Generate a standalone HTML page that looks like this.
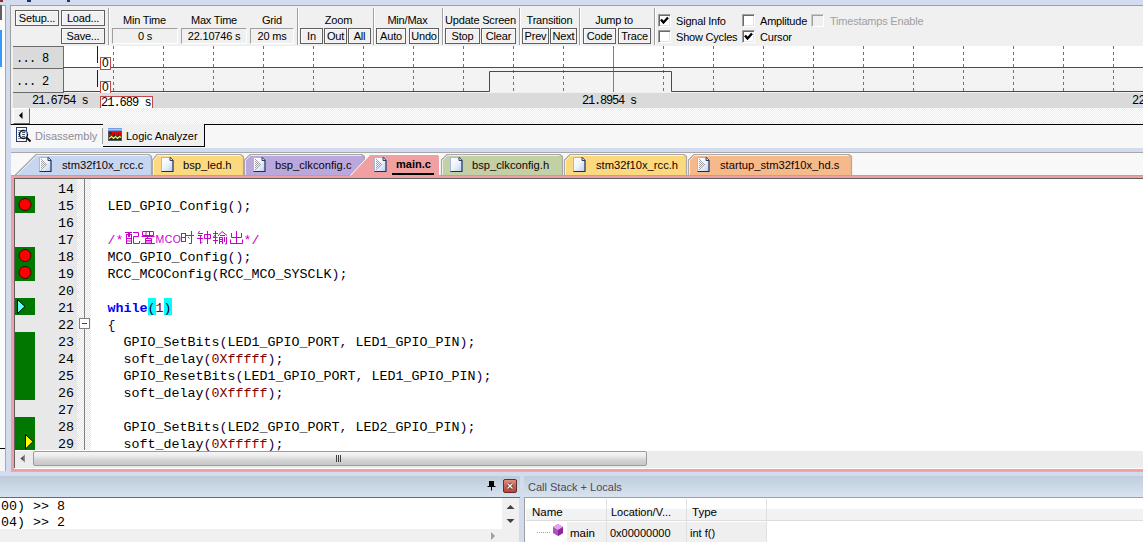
<!DOCTYPE html><html><head><meta charset="utf-8"><style>
*{margin:0;padding:0;box-sizing:border-box}
html,body{width:1143px;height:542px;overflow:hidden;background:#f0f0f0;font-family:"Liberation Sans",sans-serif;font-size:11px;color:#000}
div,span{position:absolute}
.t{white-space:nowrap;line-height:13px}
.btn{border:1px solid #5f5f5f;background:#f0f0f0;box-shadow:inset 1px 1px 0 #fcfcfc,inset -1px -1px 0 #f6f6f6;text-align:center;line-height:15px;white-space:nowrap;letter-spacing:-0.2px}
.fld{border:1px solid #a0a0a0;border-right-color:#fff;border-bottom-color:#fff;background:#f0f0f0;text-align:center;line-height:15px;white-space:nowrap;letter-spacing:-0.2px}
.lbl{text-align:center;white-space:nowrap;line-height:13px;letter-spacing:-0.2px}
.sep{width:2px;border-left:1px solid #a0a0a0;border-right:1px solid #fff}
.mono{font-family:"Liberation Mono",monospace}
.cl{left:91.5px;font-family:"Liberation Mono",monospace;font-size:13.33px;white-space:pre;line-height:17px;height:17px}
.ln{left:15px;width:59px;text-align:right;font-family:"Liberation Mono",monospace;font-size:13.33px;line-height:17px;height:17px}
.cb{width:13px;height:13px;border:1px solid;border-color:#a0a0a0 #fff #fff #a0a0a0;background:#fff;box-shadow:inset 1px 1px 0 #696969,inset -1px -1px 0 #e3e3e3}
.b{font-weight:bold}
.tabt{font-size:11px;line-height:13px;white-space:nowrap;color:#1a0a0a}
</style></head><body>
<div style="left:0px;top:0px;width:1143px;height:5px;background:#d3dbee"></div>
<div style="left:0px;top:0px;width:3px;height:2px;background:#8a3030"></div>
<div style="left:27px;top:0px;width:4px;height:2px;background:#203060"></div>
<div style="left:67px;top:0px;width:3px;height:2px;background:#303050"></div>
<div style="left:0px;top:5px;width:6px;height:466px;background:#fbfbfb;border-right:1px solid #a8a8a8;border-top:1px solid #a8a8a8"></div>
<div style="left:0px;top:5px;width:2px;height:15px;background:#606060"></div>
<div style="left:0px;top:30px;width:2px;height:37px;background:#3399ff"></div>
<div style="left:0px;top:448px;width:5px;height:1px;background:#000"></div>
<div style="left:0px;top:449px;width:5px;height:22px;background:#f5f5f5"></div>
<div style="left:6px;top:5px;width:5px;height:466px;background:#d3dbee"></div>
<div style="left:10px;top:5px;width:1133px;height:120px;background:#f0f0f0;border-left:1px solid #a0a0a0;border-top:1px solid #a0a0a0"></div>
<div class="btn" style="left:15px;top:10px;width:44px;height:16px">Setup...</div>
<div class="btn" style="left:61px;top:10px;width:44px;height:16px">Load...</div>
<div class="btn" style="left:61px;top:28px;width:44px;height:16px">Save...</div>
<div class="sep" style="left:108px;top:8px;height:37px"></div>
<div class="lbl" style="left:112px;top:14px;width:65px">Min Time</div>
<div class="fld" style="left:112px;top:28px;width:66px;height:16px">0 s</div>
<div class="lbl" style="left:181px;top:14px;width:66px">Max Time</div>
<div class="fld" style="left:181px;top:28px;width:66px;height:16px">22.10746 s</div>
<div class="lbl" style="left:250px;top:14px;width:44px">Grid</div>
<div class="fld" style="left:250px;top:28px;width:44px;height:16px">20 ms</div>
<div class="sep" style="left:297px;top:8px;height:37px"></div>
<div class="lbl" style="left:303px;top:14px;width:71px">Zoom</div>
<div class="btn" style="left:300px;top:28px;width:23px;height:16px">In</div>
<div class="btn" style="left:324px;top:28px;width:23px;height:16px">Out</div>
<div class="btn" style="left:348px;top:28px;width:23px;height:16px">All</div>
<div class="sep" style="left:373px;top:8px;height:37px"></div>
<div class="lbl" style="left:376px;top:14px;width:63px">Min/Max</div>
<div class="btn" style="left:376px;top:28px;width:30px;height:16px">Auto</div>
<div class="btn" style="left:409px;top:28px;width:30px;height:16px">Undo</div>
<div class="sep" style="left:442px;top:8px;height:37px"></div>
<div class="lbl" style="left:445px;top:14px;width:71px">Update Screen</div>
<div class="btn" style="left:445px;top:28px;width:35px;height:16px">Stop</div>
<div class="btn" style="left:481px;top:28px;width:35px;height:16px">Clear</div>
<div class="sep" style="left:519px;top:8px;height:37px"></div>
<div class="lbl" style="left:522px;top:14px;width:55px">Transition</div>
<div class="btn" style="left:522px;top:28px;width:27px;height:16px">Prev</div>
<div class="btn" style="left:550px;top:28px;width:27px;height:16px">Next</div>
<div class="sep" style="left:579px;top:8px;height:37px"></div>
<div class="lbl" style="left:580px;top:14px;width:68px">Jump to</div>
<div class="btn" style="left:583px;top:28px;width:33px;height:16px">Code</div>
<div class="btn" style="left:618px;top:28px;width:33px;height:16px">Trace</div>
<div class="sep" style="left:654px;top:8px;height:37px"></div>
<div class="cb" style="left:658px;top:14px;"><svg width="13" height="13" style="position:absolute;left:-1px;top:-1px"><path d="M3 5.5L5.5 8.5L10 3.5" stroke="#000" stroke-width="2.4" fill="none"/></svg></div>
<div class="t" style="left:676px;top:15px;letter-spacing:-0.2px">Signal Info</div>
<div class="cb" style="left:658px;top:30px;"></div>
<div class="t" style="left:676px;top:31px;letter-spacing:-0.2px">Show Cycles</div>
<div class="cb" style="left:742px;top:14px;"></div>
<div class="t" style="left:760px;top:15px;letter-spacing:-0.2px">Amplitude</div>
<div class="cb" style="left:742px;top:30px;"><svg width="13" height="13" style="position:absolute;left:-1px;top:-1px"><path d="M3 5.5L5.5 8.5L10 3.5" stroke="#000" stroke-width="2.4" fill="none"/></svg></div>
<div class="t" style="left:760px;top:31px;letter-spacing:-0.2px">Cursor</div>
<div class="cb" style="left:811px;top:14px;background:#f0f0f0;border-color:#c8c8c8 #fff #fff #c8c8c8;box-shadow:inset 1px 1px 0 #a0a0a0,inset -1px -1px 0 #f0f0f0;"></div>
<div class="t" style="left:830px;top:15px;color:#a0a0a0;letter-spacing:-0.2px">Timestamps Enable</div>
<div style="left:63px;top:46px;width:1080px;height:22px;background:#fff"></div>
<div style="left:63px;top:68px;width:1080px;height:24px;background:#f3f3f3"></div>
<div style="left:13px;top:46px;width:51px;height:23px;background:#dadada;border:1px solid #6a6a6a;border-left:0"></div>
<div style="left:13px;top:68px;width:51px;height:25px;background:#e2e2e2;border:1px solid #6a6a6a;border-left:0"></div>
<div class="t mono" style="left:16px;top:53px;font-size:12px;letter-spacing:-0.7px">... 8</div>
<div class="t mono" style="left:16px;top:76px;font-size:12px;letter-spacing:-0.7px">... 2</div>
<svg style="position:absolute;left:0;top:0" width="1143" height="125">
<path d="M113.5 46V92M163.5 46V92M213.5 46V92M263.5 46V92M313.5 46V92M363.5 46V92M413.5 46V92M463.5 46V92M513.5 46V92M563.5 46V92M663.5 46V92M713.5 46V92M763.5 46V92M813.5 46V92M863.5 46V92M913.5 46V92M963.5 46V92M1013.5 46V92M1063.5 46V92M1113.5 46V92" stroke="#707070" stroke-dasharray="3,3" />
<path d="M613.5 46V92" stroke="#808080"/>
<path d="M63 67.5H1143" stroke="#ff0000"/>
<path d="M63 91.5H489.5V71.5H671.5V91.5H1143" stroke="#008000" fill="none"/>
<path d="M97.5 46V63M97.5 70V87" stroke="#0000ff"/>
<rect x="100.5" y="57.5" width="10" height="12" fill="#fff" stroke="#c04848"/>
<rect x="100.5" y="81.5" width="10" height="12" fill="#fff" stroke="#c04848"/>
</svg>
<div class="t" style="left:102px;top:57px;font-size:12px;line-height:13px">0</div>
<div class="t" style="left:102px;top:81px;font-size:12px;line-height:13px">0</div>
<div style="left:13px;top:93px;width:1130px;height:15px;background:#dadada"></div>
<div class="t mono" style="left:32px;top:94px;font-size:12px;line-height:14px;letter-spacing:-1px">21.6754 s</div>
<div style="left:100px;top:96px;width:53px;height:12px;background:#fff;border:1px solid #c04848;border-bottom:0"></div>
<div class="t mono" style="left:101px;top:96px;font-size:12px;line-height:14px;letter-spacing:-1px">21.689 s</div>
<div class="t mono" style="left:582px;top:94px;font-size:12px;line-height:14px;letter-spacing:-1.2px">21.8954 s</div>
<div class="t mono" style="left:1132px;top:94px;font-size:12px;line-height:14px;letter-spacing:-0.7px">22</div>
<div style="left:12px;top:108px;width:1131px;height:16px;background:repeating-conic-gradient(#ececec 0 25%,#ffffff 0 50%) 0 0/2px 2px"></div>
<div style="left:13px;top:108px;width:17px;height:16px;background:#f0f0f0;border:1px solid;border-color:#fff #696969 #696969 #fff"></div>
<svg style="position:absolute;left:18px;top:111px" width="8" height="9"><path d="M1 4.5L4.5 1V8Z" fill="#000"/></svg>
<div style="left:11px;top:124px;width:1132px;height:1px;background:#000"></div>
<div style="left:11px;top:125px;width:1132px;height:23px;background:#f7f7f7"></div>
<div style="left:103px;top:124px;width:102px;height:23px;background:#f0f0f0;border-right:1px solid #000;border-bottom:1px solid #000"></div>
<div style="left:102px;top:124px;width:1px;height:1px;background:#000"></div>
<div style="left:102px;top:128px;width:1px;height:16px;background:#a0a0a0"></div>
<svg style="position:absolute;left:15px;top:126px" width="18" height="18">
<rect x="1.5" y="1.5" width="10" height="14" fill="#f8faff" stroke="#2a3a6a"/>
<path d="M3 4.5h4M3 6.5h2M3 8.5h2M3 10.5h2M3 12.5h4" stroke="#7080a0"/>
<circle cx="8.5" cy="8.5" r="4" fill="#eef2f8" stroke="#111" stroke-width="1.4"/>
<path d="M7 6.5h3M7 8.5h3M7 10.5h3" stroke="#505a70"/>
<path d="M11.5 11.5L15.5 15.5" stroke="#111" stroke-width="2"/>
<path d="M9.5 4.8a3.6 3.6 0 0 1 2.7 3.2" stroke="#3a9ae8" stroke-width="1.3" fill="none"/>
</svg>
<div class="t" style="left:35px;top:129px;color:#8e8c98;font-size:11px;line-height:14px">Disassembly</div>
<svg style="position:absolute;left:108px;top:128px" width="14" height="13">
<defs><linearGradient id="gla" x1="0" y1="0" x2="0" y2="1"><stop offset="0" stop-color="#5a88dc"/><stop offset="0.5" stop-color="#a8c4f4"/><stop offset="1" stop-color="#5a88dc"/></linearGradient></defs>
<rect x="0" y="0" width="14" height="13" fill="#222a3a"/>
<rect x="0.5" y="3.5" width="13" height="9" fill="none" stroke="#505a6a"/>
<rect x="0" y="0" width="14" height="3" fill="url(#gla)"/>
<path d="M1 7H4.5V4.2H7.5V7H9.5V4.2H12V7H13" stroke="#ff0000" stroke-width="1.6" fill="none"/>
<path d="M1 10.5L3.5 8.5L5.5 10.5L7.5 8.5L9.5 10.5L11.5 8.5L13 9.5" stroke="#ffff00" stroke-width="1.2" fill="none"/>
</svg>
<div class="t" style="left:126px;top:129px;font-size:11px;line-height:14px">Logic Analyzer</div>
<div style="left:11px;top:148px;width:1132px;height:5px;background:#d3dbee"></div>
<div style="left:11px;top:152px;width:1132px;height:1px;background:#a8a8a8"></div>
<div style="left:11px;top:153px;width:1132px;height:22px;background:#f8f8f8"></div>
<div style="left:11px;top:175px;width:1132px;height:1px;background:#a8a8a8"></div>
<svg style="position:absolute;left:0;top:0" width="1143" height="180">
<path d="M15 175.5L36 154.5H149L151.5 156.5V175.5Z" fill="#c6d5f0" stroke="#a8a8a8" stroke-width="1.2"/>
<path d="M17 175L37 155.5H148.5" fill="none" stroke="#fff" stroke-opacity="0.7"/>
<path d="M152.5 175.5V160L157 154.5H241L243.5 156.5V175.5" fill="#fcd97e" stroke="#a8a8a8" stroke-width="1.2"/>
<path d="M153.5 175V160.5L157.5 155.5H240.5" fill="none" stroke="#fff" stroke-opacity="0.7"/>
<path d="M244.5 175.5V160L250 154.5H362L364.5 156.5V175.5" fill="#baa8dc" stroke="#a8a8a8" stroke-width="1.2"/>
<path d="M245.5 175V160.5L250.5 155.5H361.5" fill="none" stroke="#fff" stroke-opacity="0.7"/>
<path d="M441.5 175.5V160L447 154.5H560L562.5 156.5V175.5" fill="#c3cfa5" stroke="#a8a8a8" stroke-width="1.2"/>
<path d="M442.5 175V160.5L447.5 155.5H559.5" fill="none" stroke="#fff" stroke-opacity="0.7"/>
<path d="M564.5 175.5V160L570 154.5H684L686.5 156.5V175.5" fill="#fcd97e" stroke="#a8a8a8" stroke-width="1.2"/>
<path d="M565.5 175V160.5L570.5 155.5H683.5" fill="none" stroke="#fff" stroke-opacity="0.7"/>
<path d="M688.5 175.5V160L694 154.5H849L851.5 156.5V175.5" fill="#f5b98a" stroke="#a8a8a8" stroke-width="1.2"/>
<path d="M689.5 175V160.5L694.5 155.5H848.5" fill="none" stroke="#fff" stroke-opacity="0.7"/>
<path d="M350 176.5L370 154.5H437.5L439.5 156.5V176.5Z" fill="#f0a0a0" stroke="none"/>
<path d="M350.5 175.5L370 154.5H437.5L439.5 156.5V175" fill="none" stroke="#fff"/>
</svg>
<svg style="position:absolute;left:39px;top:157px" width="13" height="16">
<defs><linearGradient id="gd39" x1="0" y1="0" x2="1" y2="1"><stop offset="0" stop-color="#ffffff"/><stop offset="0.5" stop-color="#eef3fc"/><stop offset="1" stop-color="#b8ccf0"/></linearGradient></defs>
<path d="M0.5 0.5H9L12 3.5V14.5H0.5Z" fill="url(#gd39)" stroke="#a8b8d8"/>
<path d="M9 0.5L12 3.5V14.5H0.5" fill="none" stroke="#1c2c50" stroke-width="1.1"/>
<path d="M9 0.5V3.5H12" fill="#dde8f8" stroke="#1c2c50" stroke-width="0.9"/>
<path d="M2 2h1v1h-1zM3 3h1v1h-1zM2 4h1v1h-1zM4 4h1v1h-1zM3 5h1v1h-1zM5 5h1v1h-1zM2 6h1v1h-1zM4 6h1v1h-1zM6 6h1v1h-1zM3 7h1v1h-1zM5 7h1v1h-1zM7 7h1v1h-1zM2 8h1v1h-1zM4 8h1v1h-1zM6 8h1v1h-1zM3 9h1v1h-1zM5 9h1v1h-1zM2 10h1v1h-1zM4 10h1v1h-1zM3 11h1v1h-1zM2 12h1v1h-1z" fill="#a0a0a0"/>
</svg>
<div class="t" style="left:62px;top:159px;font-size:11.2px;color:#100404">stm32f10x_rcc.c</div>
<svg style="position:absolute;left:161px;top:157px" width="13" height="16">
<defs><linearGradient id="gd161" x1="0" y1="0" x2="1" y2="1"><stop offset="0" stop-color="#ffffff"/><stop offset="0.5" stop-color="#eef3fc"/><stop offset="1" stop-color="#b8ccf0"/></linearGradient></defs>
<path d="M0.5 0.5H9L12 3.5V14.5H0.5Z" fill="url(#gd161)" stroke="#a8b8d8"/>
<path d="M9 0.5L12 3.5V14.5H0.5" fill="none" stroke="#1c2c50" stroke-width="1.1"/>
<path d="M9 0.5V3.5H12" fill="#dde8f8" stroke="#1c2c50" stroke-width="0.9"/>

</svg>
<div class="t" style="left:183px;top:159px;font-size:11.2px;color:#100404">bsp_led.h</div>
<svg style="position:absolute;left:253px;top:157px" width="13" height="16">
<defs><linearGradient id="gd253" x1="0" y1="0" x2="1" y2="1"><stop offset="0" stop-color="#ffffff"/><stop offset="0.5" stop-color="#eef3fc"/><stop offset="1" stop-color="#b8ccf0"/></linearGradient></defs>
<path d="M0.5 0.5H9L12 3.5V14.5H0.5Z" fill="url(#gd253)" stroke="#a8b8d8"/>
<path d="M9 0.5L12 3.5V14.5H0.5" fill="none" stroke="#1c2c50" stroke-width="1.1"/>
<path d="M9 0.5V3.5H12" fill="#dde8f8" stroke="#1c2c50" stroke-width="0.9"/>
<path d="M2 2h1v1h-1zM3 3h1v1h-1zM2 4h1v1h-1zM4 4h1v1h-1zM3 5h1v1h-1zM5 5h1v1h-1zM2 6h1v1h-1zM4 6h1v1h-1zM6 6h1v1h-1zM3 7h1v1h-1zM5 7h1v1h-1zM7 7h1v1h-1zM2 8h1v1h-1zM4 8h1v1h-1zM6 8h1v1h-1zM3 9h1v1h-1zM5 9h1v1h-1zM2 10h1v1h-1zM4 10h1v1h-1zM3 11h1v1h-1zM2 12h1v1h-1z" fill="#a0a0a0"/>
</svg>
<div class="t" style="left:275px;top:159px;font-size:11.2px;color:#100404">bsp_clkconfig.c</div>
<svg style="position:absolute;left:450px;top:157px" width="13" height="16">
<defs><linearGradient id="gd450" x1="0" y1="0" x2="1" y2="1"><stop offset="0" stop-color="#ffffff"/><stop offset="0.5" stop-color="#eef3fc"/><stop offset="1" stop-color="#b8ccf0"/></linearGradient></defs>
<path d="M0.5 0.5H9L12 3.5V14.5H0.5Z" fill="url(#gd450)" stroke="#a8b8d8"/>
<path d="M9 0.5L12 3.5V14.5H0.5" fill="none" stroke="#1c2c50" stroke-width="1.1"/>
<path d="M9 0.5V3.5H12" fill="#dde8f8" stroke="#1c2c50" stroke-width="0.9"/>

</svg>
<div class="t" style="left:472px;top:159px;font-size:11.2px;color:#100404">bsp_clkconfig.h</div>
<svg style="position:absolute;left:573px;top:157px" width="13" height="16">
<defs><linearGradient id="gd573" x1="0" y1="0" x2="1" y2="1"><stop offset="0" stop-color="#ffffff"/><stop offset="0.5" stop-color="#eef3fc"/><stop offset="1" stop-color="#b8ccf0"/></linearGradient></defs>
<path d="M0.5 0.5H9L12 3.5V14.5H0.5Z" fill="url(#gd573)" stroke="#a8b8d8"/>
<path d="M9 0.5L12 3.5V14.5H0.5" fill="none" stroke="#1c2c50" stroke-width="1.1"/>
<path d="M9 0.5V3.5H12" fill="#dde8f8" stroke="#1c2c50" stroke-width="0.9"/>

</svg>
<div class="t" style="left:596px;top:159px;font-size:11.2px;color:#100404">stm32f10x_rcc.h</div>
<svg style="position:absolute;left:697px;top:157px" width="13" height="16">
<defs><linearGradient id="gd697" x1="0" y1="0" x2="1" y2="1"><stop offset="0" stop-color="#ffffff"/><stop offset="0.5" stop-color="#eef3fc"/><stop offset="1" stop-color="#b8ccf0"/></linearGradient></defs>
<path d="M0.5 0.5H9L12 3.5V14.5H0.5Z" fill="url(#gd697)" stroke="#a8b8d8"/>
<path d="M9 0.5L12 3.5V14.5H0.5" fill="none" stroke="#1c2c50" stroke-width="1.1"/>
<path d="M9 0.5V3.5H12" fill="#dde8f8" stroke="#1c2c50" stroke-width="0.9"/>
<path d="M2 2h1v1h-1zM3 3h1v1h-1zM2 4h1v1h-1zM4 4h1v1h-1zM3 5h1v1h-1zM5 5h1v1h-1zM2 6h1v1h-1zM4 6h1v1h-1zM6 6h1v1h-1zM3 7h1v1h-1zM5 7h1v1h-1zM7 7h1v1h-1zM2 8h1v1h-1zM4 8h1v1h-1zM6 8h1v1h-1zM3 9h1v1h-1zM5 9h1v1h-1zM2 10h1v1h-1zM4 10h1v1h-1zM3 11h1v1h-1zM2 12h1v1h-1z" fill="#a0a0a0"/>
</svg>
<div class="t" style="left:720px;top:159px;font-size:11.2px;color:#100404">startup_stm32f10x_hd.s</div>
<svg style="position:absolute;left:374px;top:157px" width="13" height="16">
<defs><linearGradient id="gd374" x1="0" y1="0" x2="1" y2="1"><stop offset="0" stop-color="#ffffff"/><stop offset="0.5" stop-color="#eef3fc"/><stop offset="1" stop-color="#b8ccf0"/></linearGradient></defs>
<path d="M0.5 0.5H9L12 3.5V14.5H0.5Z" fill="url(#gd374)" stroke="#a8b8d8"/>
<path d="M9 0.5L12 3.5V14.5H0.5" fill="none" stroke="#1c2c50" stroke-width="1.1"/>
<path d="M9 0.5V3.5H12" fill="#dde8f8" stroke="#1c2c50" stroke-width="0.9"/>
<path d="M2 2h1v1h-1zM3 3h1v1h-1zM2 4h1v1h-1zM4 4h1v1h-1zM3 5h1v1h-1zM5 5h1v1h-1zM2 6h1v1h-1zM4 6h1v1h-1zM6 6h1v1h-1zM3 7h1v1h-1zM5 7h1v1h-1zM7 7h1v1h-1zM2 8h1v1h-1zM4 8h1v1h-1zM6 8h1v1h-1zM3 9h1v1h-1zM5 9h1v1h-1zM2 10h1v1h-1zM4 10h1v1h-1zM3 11h1v1h-1zM2 12h1v1h-1z" fill="#a0a0a0"/>
</svg>
<div class="t" style="left:396px;top:158px;font-size:11px;font-weight:bold;color:#000">main.c</div>
<div style="left:392px;top:173px;width:42px;height:2px;background:#000"></div>
<div style="left:11px;top:176px;width:1132px;height:295px;background:#f0a0a0"></div>
<div style="left:0px;top:471px;width:1143px;height:1px;background:#d3dbee"></div>
<div style="left:11px;top:471px;width:1132px;height:1px;background:#d8b0b8"></div>
<div style="left:11px;top:175px;width:339px;height:1px;background:#a8a8a8"></div>
<div style="left:440px;top:175px;width:703px;height:1px;background:#a8a8a8"></div>
<div style="left:13px;top:177px;width:1130px;height:1px;background:#b4b4b4"></div>
<div style="left:14px;top:178px;width:1129px;height:291px;background:#fff;border-left:1px solid #606060;border-top:1px solid #606060"></div>
<div style="left:15px;top:179px;width:62px;height:271px;background:#e8e8e8"></div>
<div style="left:77px;top:179px;width:14px;height:271px;background:repeating-conic-gradient(#e6e6e6 0 25%,#ffffff 0 50%) 0 0/2px 2px"></div>
<div style="left:84px;top:179px;width:1px;height:271px;background:#808080"></div>
<div style="left:91px;top:179px;width:1052px;height:271px;background:#fff"></div>
<svg style="position:absolute;left:0;top:0" width="100" height="470">
<rect x="15" y="196" width="20" height="17" fill="#007800"/>
<circle cx="25" cy="204.5" r="6" fill="#ff0000" stroke="#200000" stroke-width="0.8"/>
<rect x="15" y="247" width="20" height="17" fill="#007800"/>
<circle cx="25" cy="255.5" r="6" fill="#ff0000" stroke="#200000" stroke-width="0.8"/>
<rect x="15" y="264" width="20" height="17" fill="#007800"/>
<circle cx="25" cy="272.5" r="6" fill="#ff0000" stroke="#200000" stroke-width="0.8"/>
<rect x="15" y="298" width="20" height="17" fill="#007800"/>
<path d="M17.5 299.5L25 306.5L17.5 313.5Z" fill="#60ffff" stroke="#000"/>
<rect x="15" y="332" width="20" height="17" fill="#007800"/>
<rect x="15" y="349" width="20" height="17" fill="#007800"/>
<rect x="15" y="366" width="20" height="17" fill="#007800"/>
<rect x="15" y="383" width="20" height="17" fill="#007800"/>
<rect x="15" y="417" width="20" height="17" fill="#007800"/>
<rect x="15" y="434" width="20" height="16" fill="#007800"/>
<path d="M25.5 434.5L33 441.5L25.5 449Z" fill="#ffff00" stroke="#000"/>
<rect x="79.5" y="318.5" width="10" height="10" fill="#fff" stroke="#808080"/><path d="M82 323.5H87" stroke="#404040"/>
</svg>
<div class="ln" style="top:181px;color:#000">14</div>
<div class="ln" style="top:198px;color:#000">15</div>
<div class="ln" style="top:215px;color:#000">16</div>
<div class="ln" style="top:232px;color:#000">17</div>
<div class="ln" style="top:249px;color:#000">18</div>
<div class="ln" style="top:266px;color:#000">19</div>
<div class="ln" style="top:283px;color:#000">20</div>
<div class="ln" style="top:300px;color:#000">21</div>
<div class="ln" style="top:317px;color:#000">22</div>
<div class="ln" style="top:334px;color:#000">23</div>
<div class="ln" style="top:351px;color:#000">24</div>
<div class="ln" style="top:368px;color:#000">25</div>
<div class="ln" style="top:385px;color:#000">26</div>
<div class="ln" style="top:402px;color:#000">27</div>
<div class="ln" style="top:419px;color:#000">28</div>
<div class="ln" style="top:436px;color:#000">29</div>
<div style="left:148px;top:298px;width:8px;height:17px;background:#00ffff"></div>
<div style="left:164px;top:298px;width:8px;height:17px;background:#00ffff"></div>
<div class="cl" style="top:198px;color:#000">  LED_GPIO_Config<span style="position:static;color:#100040">();</span></div>
<div class="cl" style="top:249px;color:#000">  MCO_GPIO_Config<span style="position:static;color:#100040">();</span></div>
<div class="cl" style="top:266px;color:#000">  RCC_MCOConfig<span style="position:static;color:#100040">(</span>RCC_MCO_SYSCLK<span style="position:static;color:#100040">);</span></div>
<div class="cl" style="top:300px;color:#000">  <span style="position:static;color:#0000ff;font-weight:bold">while</span><span style="position:static;color:#200030">(</span><span style="position:static;color:#800000">1</span><span style="position:static;color:#200030">)</span></div>
<div class="cl" style="top:317px;color:#000">  <span style="position:static;color:#100040">{</span></div>
<div class="cl" style="top:334px;color:#000">    GPIO_SetBits<span style="position:static;color:#100040">(</span>LED1_GPIO_PORT<span style="position:static;color:#100040">,</span> LED1_GPIO_PIN<span style="position:static;color:#100040">);</span></div>
<div class="cl" style="top:351px;color:#000">    soft_delay<span style="position:static;color:#100040">(</span><span style="position:static;color:#800000">0Xfffff</span><span style="position:static;color:#100040">);</span></div>
<div class="cl" style="top:368px;color:#000">    GPIO_ResetBits<span style="position:static;color:#100040">(</span>LED1_GPIO_PORT<span style="position:static;color:#100040">,</span> LED1_GPIO_PIN<span style="position:static;color:#100040">);</span></div>
<div class="cl" style="top:385px;color:#000">    soft_delay<span style="position:static;color:#100040">(</span><span style="position:static;color:#800000">0Xfffff</span><span style="position:static;color:#100040">);</span></div>
<div class="cl" style="top:419px;color:#000">    GPIO_SetBits<span style="position:static;color:#100040">(</span>LED2_GPIO_PORT<span style="position:static;color:#100040">,</span> LED2_GPIO_PIN<span style="position:static;color:#100040">);</span></div>
<div class="cl" style="top:436px;color:#000">    soft_delay<span style="position:static;color:#100040">(</span><span style="position:static;color:#800000">0Xfffff</span><span style="position:static;color:#100040">);</span></div>
<div class="cl" style="top:232px;color:#cc00cc">  /*<span style="position:static;display:inline-block;width:32px"></span>   <span style="position:static;display:inline-block;width:64px"></span>*/</div>
<svg style="position:absolute;left:0;top:0" width="260" height="250" fill="none" stroke="#cc00cc" stroke-width="1">
<path d="M125 232.5H132M126.5 234V243.5M131.5 234V243.5M126 234.5H132M128.5 232.5V237M129.5 232.5V237M126 238.5H132M126 241H132M126 243.5H132"/>
<path d="M133 232.5H138.5M138.5 232.5V236.5M133.5 236.5H138.5M133.5 236.5V243.5H139.5M139.5 241V243.5"/>
<path d="M142.5 231.5H153.5V235.5H142.5ZM146 231.5V235.5M149.5 231.5V235.5M141.5 236.5H154.5M147.5 235.5V238M145.5 238.5H151.5V243.5M145.5 238.5V243.5M145.5 240.5H151.5M145.5 242H151.5M141 243.5H155"/>
<path d="M181.5 233V242M185.5 233V242M181.5 233.5H185.5M181.5 237.5H185.5M181.5 241.5H185.5M186 235.5H194M191.5 231V243.5H189M188 237L189.5 238.5"/>
<path d="M199.5 231L198 234M199 233.5H203M198 235.5H202M197 238.5H203M200.5 235.5V243.5M200.5 243.5L202.5 242M204.5 234.5H210.5V238.5H204.5ZM207.5 231V244"/>
<path d="M213 233.5H218M215.5 231V244M213.5 237L215.5 234.5M213 237.5H217.5M213 240.5H218M218 236L222 231.5L227 235.5M220 235.5H225M219.5 237V244M219.5 237.5H222.5V244M219.5 239.5H222.5M219.5 241.5H222.5M224.5 237V242M226.5 237V244H225"/>
<path d="M236.5 231V244M231.5 233V237.5H241.5V233M230.5 239.5V243.5H242.5V239.5"/>
</svg>
<div style="left:157px;top:235px;width:0px;height:0px;"></div>
<div class="t" style="left:156px;top:233px;font-family:Liberation Sans;font-size:10px;color:#cc00cc;letter-spacing:0.5px;transform:scaleX(1.05)">MCO</div>
<div style="left:15px;top:451px;width:1128px;height:17px;background:#ececec"></div>
<svg style="position:absolute;left:19px;top:454px" width="8" height="9"><defs><linearGradient id="ga" x1="0" x2="1"><stop offset="0" stop-color="#202020"/><stop offset="1" stop-color="#9a9a9a"/></linearGradient></defs><path d="M6 0.5L1.5 4.5L6 8.5Z" fill="url(#ga)"/></svg>
<div style="left:33px;top:451px;width:614px;height:15px;background:linear-gradient(#f6f6f6 0,#ececec 30%,#d4d4d4 60%,#c6c6c6 100%);border:1px solid #9c9c9c;border-radius:2px"></div>
<svg style="position:absolute;left:334px;top:454px" width="10" height="9"><path d="M2.5 1V8M4.5 1V8M6.5 1V8" stroke="#404040"/></svg>
<div style="left:14px;top:468px;width:1129px;height:1px;background:#fff"></div>
<div style="left:0px;top:472px;width:1143px;height:70px;background:#d3dbee"></div>
<div style="left:0px;top:476px;width:520px;height:21px;background:linear-gradient(#bccad9,#d6e2ef)"></div>
<div style="left:0px;top:497px;width:520px;height:1px;background:#696969"></div>
<div style="left:0px;top:498px;width:502px;height:31px;background:#fff"></div>
<div style="left:502px;top:498px;width:17px;height:31px;background:#f0f0f0"></div>
<svg style="position:absolute;left:505px;top:502px" width="11" height="24"><path d="M1.5 7L5.5 3L9.5 7Z" fill="#404040"/><path d="M1.5 17L5.5 21L9.5 17Z" fill="#404040"/></svg>
<div style="left:0px;top:529px;width:519px;height:13px;background:#f0f0f0"></div>
<svg style="position:absolute;left:489px;top:531px" width="8" height="10"><path d="M2 1L6 5L2 9Z" fill="#a0a0a0"/></svg>
<div class="t mono" style="left:1px;top:499px;font-size:13.33px;line-height:16px">00) &gt;&gt; 8</div>
<div class="t mono" style="left:1px;top:515px;font-size:13.33px;line-height:16px">04) &gt;&gt; 2</div>
<svg style="position:absolute;left:486px;top:479px" width="32" height="14">
<path d="M3 2h5v5h-5z" fill="#000"/><path d="M1.5 7.5h8M5.5 7.5v4" stroke="#000" fill="none"/>
<defs><linearGradient id="gc" x1="0" y1="0" x2="0" y2="1"><stop offset="0" stop-color="#e0958a"/><stop offset="0.5" stop-color="#c8604f"/><stop offset="1" stop-color="#b0483a"/></linearGradient></defs><rect x="17.5" y="0.5" width="13" height="13" rx="1.5" fill="url(#gc)" stroke="#6a2a2a"/>
<path d="M21.5 4.5L26.5 9.5M26.5 4.5L21.5 9.5" stroke="#502020" stroke-width="2.6"/><path d="M21.5 4.5L26.5 9.5M26.5 4.5L21.5 9.5" stroke="#fff" stroke-width="1.4"/>
</svg>
<div style="left:524px;top:476px;width:619px;height:21px;background:linear-gradient(#bfcddc,#d8e3ef)"></div>
<div class="t" style="left:528px;top:480px;font-size:11px;color:#4a4a5a;line-height:14px">Call Stack + Locals</div>
<div style="left:524px;top:497px;width:619px;height:45px;background:#fff;border-left:1px solid #a0a0a0;border-top:1px solid #a0a0a0"></div>
<div style="left:526px;top:499px;width:617px;height:22px;background:linear-gradient(#ffffff 0,#ffffff 45%,#f1f2f4 46%,#f1f2f4 100%);border-bottom:1px solid #dcdcdc"></div>
<div style="left:606px;top:499px;width:1px;height:43px;background:#e0e0e0"></div>
<div style="left:686px;top:499px;width:1px;height:43px;background:#e0e0e0"></div>
<div style="left:766px;top:499px;width:1px;height:43px;background:#e0e0e0"></div>
<div class="t" style="left:532px;top:505px;font-size:11.5px;line-height:14px">Name</div>
<div class="t" style="left:611px;top:505px;font-size:11px;line-height:14px">Location/V...</div>
<div class="t" style="left:692px;top:505px;font-size:11.5px;line-height:14px">Type</div>
<div style="left:567px;top:522px;width:39px;height:20px;background:#efefef"></div>
<div style="left:607px;top:522px;width:79px;height:20px;background:#efefef"></div>
<div style="left:687px;top:522px;width:79px;height:20px;background:#efefef"></div>
<svg style="position:absolute;left:535px;top:523px" width="32" height="16">
<path d="M2 9.5h14" stroke="#a0a0a0" stroke-dasharray="1,1"/>
<path d="M23 1L28 4V10L23 13L18 10V4Z" fill="#b050c0"/>
<path d="M23 1L28 4L23 7L18 4Z" fill="#e8a0f0"/>
<path d="M23 7L28 4V10L23 13Z" fill="#8a2a9a"/>
</svg>
<div class="t" style="left:570px;top:526px;font-size:11.5px;line-height:14px">main</div>
<div class="t" style="left:610px;top:526px;font-size:11px;line-height:14px">0x00000000</div>
<div class="t" style="left:690px;top:526px;font-size:11px;line-height:14px">int f()</div>
</body></html>
